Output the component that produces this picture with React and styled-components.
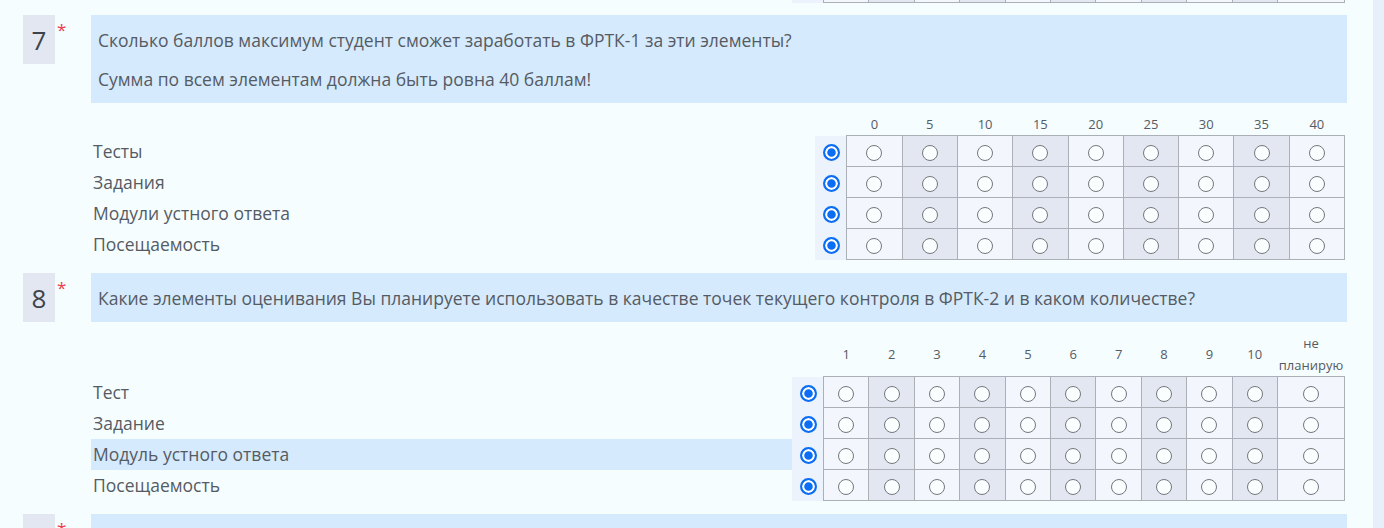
import React from "react";
import styled, { createGlobalStyle } from "styled-components";

const GlobalStyle = createGlobalStyle`
  html, body {
    margin: 0;
    padding: 0;
    height: 100%;
    overflow: hidden;
  }
  body {
    background: #f5fdff;
    font-family: "Open Sans", "Noto Sans", sans-serif;
    color: #555b63;
  }
`;

const scoreCols = ["0", "5", "10", "15", "20", "25", "30", "35", "40"];
const countCols = ["1", "2", "3", "4", "5", "6", "7", "8", "9", "10", "не планирую"];

const questions = [
  {
    num: 7,
    text: [
      "Сколько баллов максимум студент сможет заработать в ФРТК-1 за эти элементы?",
      "Сумма по всем элементам должна быть ровна 40 баллам!",
    ],
    columns: scoreCols,
    colWidth: 55.3,
    rows: ["Тесты", "Задания", "Модули устного ответа", "Посещаемость"],
  },
  {
    num: 8,
    text: [
      "Какие элементы оценивания Вы планируете использовать в качестве точек текущего контроля в ФРТК-2 и в каком количестве?",
    ],
    columns: countCols,
    colWidth: 45.4,
    lastWidth: 67,
    rows: ["Тест", "Задание", "Модуль устного ответа", "Посещаемость"],
    highlight: 2,
  },
];

const Matrix = ({ id, columns, colWidth, lastWidth, rows, highlight, noHead }) => (
  <Grid>
    <colgroup>
      <col />
      <Col $w={32} />
      {columns.map((c, i) => (
        <Col key={c} $w={i === columns.length - 1 && lastWidth ? lastWidth : colWidth} />
      ))}
    </colgroup>
    {!noHead && (
      <thead>
        <tr>
          <ColHead />
          <ColHead />
          {columns.map((c) => (
            <ColHead key={c}>{c}</ColHead>
          ))}
        </tr>
      </thead>
    )}
    <tbody>
      {rows.map((r, ri) => (
        <tr key={ri}>
          <Label $active={ri === highlight}>{r}</Label>
          <NoneCell>
            <Radio type="radio" name={`${id}-${ri}`} defaultChecked />
          </NoneCell>
          {columns.map((c, ci) => (
            <Cell key={c} $alt={ci % 2 === 1}>
              <Radio type="radio" name={`${id}-${ri}`} />
            </Cell>
          ))}
        </tr>
      ))}
    </tbody>
  </Grid>
);

const Question = ({ num, text, children }) => (
  <Block>
    <QHead>
      <NumCol>
        <NumBox>{num}</NumBox>
        <Req>*</Req>
      </NumCol>
      <QText>
        {text.map((t) => (
          <p key={t}>{t}</p>
        ))}
      </QText>
    </QHead>
    {children}
  </Block>
);

export default function App() {
  return (
    <>
      <GlobalStyle />
      <Page>
        <Main>
          <Tail>
            <MatrixWrap>
              <Matrix
                id="q6"
                columns={countCols}
                colWidth={45.4}
                lastWidth={67}
                rows={[""]}
                noHead
              />
            </MatrixWrap>
          </Tail>
          {questions.map((q) => (
            <Question key={q.num} num={q.num} text={q.text}>
              <MatrixWrap>
                <Matrix id={`q${q.num}`} {...q} />
              </MatrixWrap>
            </Question>
          ))}
          <Question num={9} text={[]} />
        </Main>
        <Strip />
      </Page>
    </>
  );
}

const Page = styled.div`
  display: flex;
  height: 100vh;
  overflow: hidden;
`;

const Main = styled.div`
  flex: 1;
  min-width: 0;
`;

const Strip = styled.div`
  width: 11px;
  background: #e6effb;
`;

const Tail = styled.div`
  height: 3px;
  overflow: hidden;
  display: flex;
  flex-direction: column;
  justify-content: flex-end;
  margin-bottom: 12px;
`;

const Block = styled.section`
  margin-bottom: 13px;
`;

const QHead = styled.div`
  display: flex;
  align-items: flex-start;
`;

const NumCol = styled.div`
  width: 91px;
  box-sizing: border-box;
  padding-left: 23px;
  display: flex;
  align-items: flex-start;
`;

const NumBox = styled.div`
  width: 32px;
  height: 49px;
  background: #e2e7f2;
  display: flex;
  align-items: center;
  justify-content: center;
  font-size: 26px;
  color: #3d434b;
`;

const Req = styled.span`
  color: #ee3b48;
  font-size: 17px;
  line-height: 1;
  margin: 6px 0 0 2px;
`;

const QText = styled.div`
  flex: 1;
  min-height: 49px;
  box-sizing: border-box;
  margin-right: 26px;
  background: #d5eafd;
  padding: 14px 7px 12px;
  font-size: 17.5px;
  line-height: 23px;

  p {
    margin: 0;
  }
  p + p {
    margin-top: 16px;
  }
`;

const MatrixWrap = styled.div`
  margin: 10px 28px 0 91px;
`;

const Grid = styled.table`
  width: 100%;
  border-collapse: collapse;
  table-layout: fixed;
`;

const Col = styled.col`
  width: ${(p) => p.$w}px;
`;

const ColHead = styled.th`
  padding: 0;
  font-size: 13px;
  line-height: 22px;
  font-weight: normal;
  text-align: center;
  vertical-align: middle;
  color: #555b63;
`;

const Label = styled.td`
  height: 31px;
  padding: 0 2px;
  font-size: 17.5px;
  line-height: 20px;
  white-space: nowrap;
  background: ${(p) => (p.$active ? "#d5eafd" : "transparent")};
`;

const NoneCell = styled.td`
  padding: 0 0 0 2px;
  text-align: center;
  vertical-align: middle;
  background: #edf3fc;
`;

const Cell = styled.td`
  padding: 0;
  text-align: center;
  vertical-align: middle;
  border: 1px solid #abb0b7;
  background: ${(p) => (p.$alt ? "#e2e7f1" : "#f3f6fd")};
`;

const Radio = styled.input`
  appearance: none;
  box-sizing: border-box;
  width: 16px;
  height: 16px;
  margin: 0;
  vertical-align: middle;
  border: 1.6px solid #74787d;
  border-radius: 50%;
  background: #fbfeff;
  cursor: pointer;

  &:checked {
    width: 17px;
    height: 17px;
    border: 2px solid #0b6ef4;
    background: #0b6ef4;
    box-shadow: inset 0 0 0 2.2px #ffffff;
  }
`;
